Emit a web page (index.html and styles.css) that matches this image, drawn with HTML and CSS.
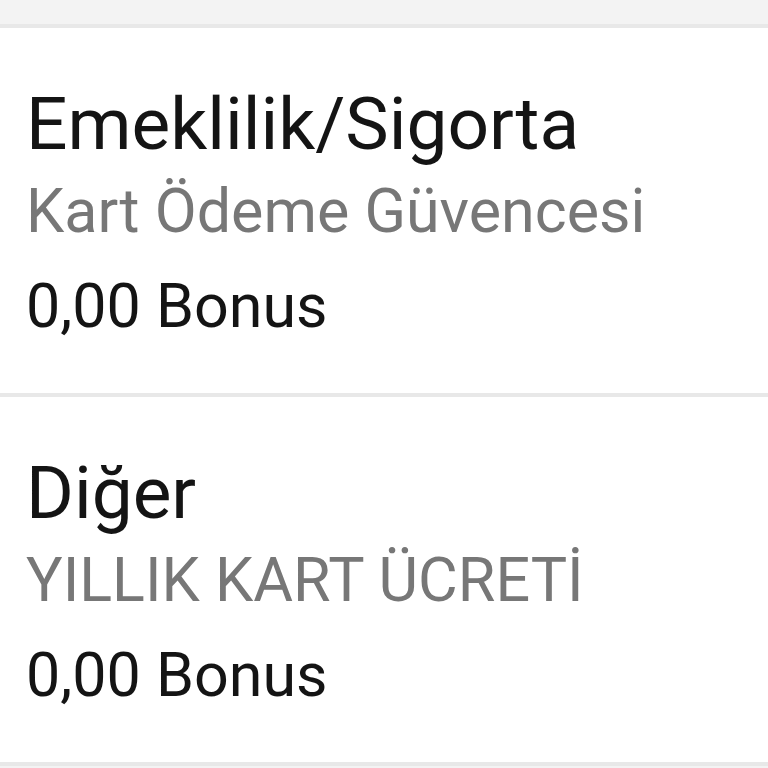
FILE: index.html
```html
<!DOCTYPE html>
<html>
  <head>
    <title>Bonus Detaylari</title>
    <link rel="stylesheet" href="styles.css">
  </head>
  <body>
    <div class="topbar"></div>
    <div class="list">
      <div class="item">
        <div class="title">Emeklilik/Sigorta</div>
        <div class="desc">Kart Ödeme Güvencesi</div>
        <div class="amount">0,00 Bonus</div>
      </div>
      <div class="item">
        <div class="title">Diğer</div>
        <div class="desc">YILLIK KART ÜCRETİ</div>
        <div class="amount">0,00 Bonus</div>
      </div>
    </div>
  </body>
</html>
```

FILE: styles.css
```css
html, body {
  margin: 0;
  padding: 0;
  background-color: #f3f3f3;
  font-family: Roboto, "Noto Sans", Arial, sans-serif;
}
.topbar {
  height: 24px;
  background-color: #f3f3f3;
}
.list {
  display: flex;
  flex-direction: column;
  gap: 4px;
  border-top: 4px solid #e8e8e8;
  border-bottom: 4px solid #e8e8e8;
  background-color: #e8e8e8;
}
.item {
  background-color: #fff;
  padding: 54px 20px 37px 26px;
}
.title {
  font-size: 73px;
  line-height: 84px;
  color: #141414;
}
.desc {
  font-size: 61px;
  line-height: 90px;
  color: #777;
}
.amount {
  font-size: 61px;
  line-height: 100px;
  color: #141414;
}
```
